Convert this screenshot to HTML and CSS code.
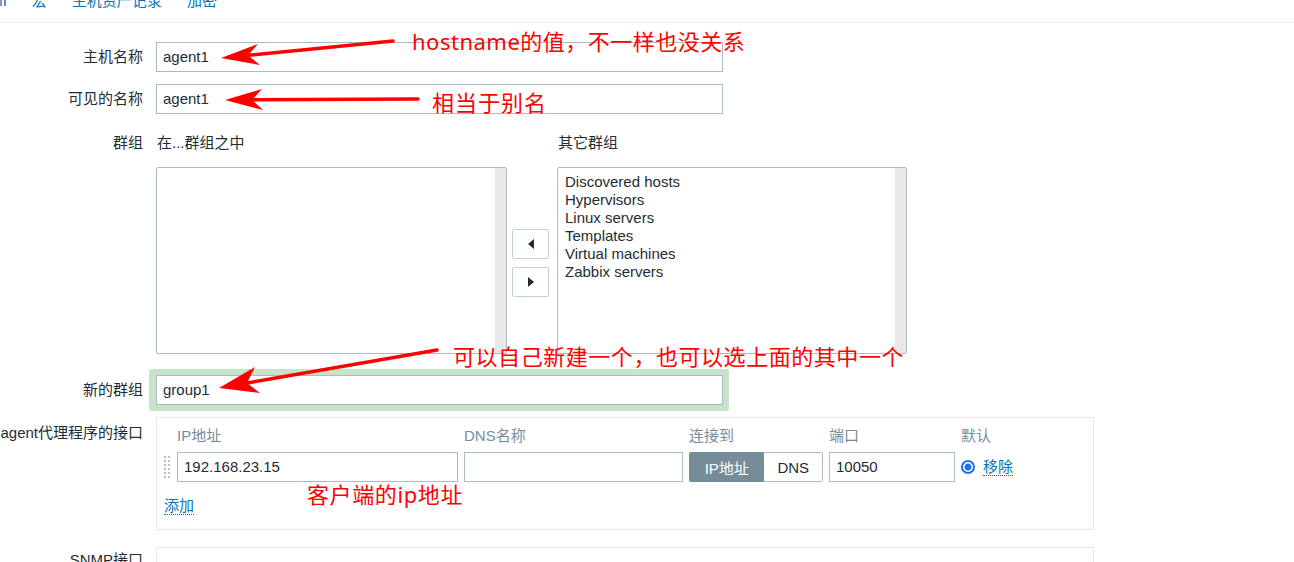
FILE: index.html
```html
<!DOCTYPE html>
<html lang="zh">
<head>
<meta charset="utf-8">
<title>主机</title>
<link rel="stylesheet" href="styles.css">
</head>
<body>
<nav class="tabs">
  <span class="tab first">IPMI</span>
  <span class="tab">宏</span>
  <span class="tab">主机资产记录</span>
  <span class="tab">加密</span>
</nav>

<div class="form">
  <div class="row r-name">
    <div class="lbl">主机名称</div>
    <div class="input w-name">agent1</div>
  </div>
  <div class="row r-visible">
    <div class="lbl">可见的名称</div>
    <div class="input w-name">agent1</div>
  </div>

  <div class="row r-groups">
    <div class="lbl">群组</div>
    <div class="groups">
      <div class="ghead">在...群组之中</div>
      <div></div>
      <div class="ghead">其它群组</div>
      <div class="listbox"><div class="items"></div><div class="sb"></div></div>
      <div class="movers">
        <button class="mv"><span class="tri-l"></span></button>
        <button class="mv"><span class="tri-r"></span></button>
      </div>
      <div class="listbox">
        <div class="items">
          <div>Discovered hosts</div>
          <div>Hypervisors</div>
          <div>Linux servers</div>
          <div>Templates</div>
          <div>Virtual machines</div>
          <div>Zabbix servers</div>
        </div>
        <div class="sb"></div>
      </div>
    </div>
  </div>

  <div class="row r-newgroup">
    <div class="lbl">新的群组</div>
    <div class="hl"><div class="input w-name">group1</div></div>
  </div>

  <div class="row r-iface">
    <div class="lbl lbl-top">agent代理程序的接口</div>
    <div class="iface">
      <div class="igrid">
        <div></div>
        <div class="ih">IP地址</div>
        <div class="ih">DNS名称</div>
        <div class="ih">连接到</div>
        <div class="ih">端口</div>
        <div class="ih">默认</div>

        <div class="handle"></div>
        <div class="input">192.168.23.15</div>
        <div class="input"></div>
        <div class="seg"><span class="seg-on">IP地址</span><span class="seg-off">DNS</span></div>
        <div class="input">10050</div>
        <div class="dflt"><span class="radio"></span><span class="link">移除</span></div>

        <div class="add"><span class="link">添加</span></div>
      </div>
    </div>
  </div>

  <div class="row r-snmp">
    <div class="lbl lbl-snmp">SNMP接口</div>
    <div class="iface snmp"></div>
  </div>
</div>

<div class="note n1">hostname的值，不一样也没关系</div>
<div class="note n2">相当于别名</div>
<div class="note n3">可以自己新建一个，也可以选上面的其中一个</div>
<div class="note n4">客户端的ip地址</div>

<svg class="arrows" width="1294" height="562" viewBox="0 0 1294 562">
  <g fill="#f00" stroke="#f00">
    <line x1="393" y1="41" x2="248" y2="55.3" stroke-width="3.5" stroke-linecap="round"/>
    <polygon points="221,58 258,44 248,55.3 260,65" stroke="none"/>
    <line x1="418" y1="99" x2="252" y2="99.8" stroke-width="3.5" stroke-linecap="round"/>
    <polygon points="225,100 262,89 252,99.8 263,110" stroke="none"/>
    <line x1="437" y1="350" x2="247" y2="383" stroke-width="3.5" stroke-linecap="round"/>
    <polygon points="219,388 255,367 247,383 260,393" stroke="none"/>
  </g>
</svg>
</body>
</html>
```
FILE: styles.css
```css
* { box-sizing: border-box; margin: 0; padding: 0; }

body {
  width: 1294px;
  height: 562px;
  overflow: hidden;
  position: relative;
  background: #fff;
  color: #1f2c33;
  font-family: "Liberation Sans", "Noto Sans CJK SC", sans-serif;
  font-size: 15px;
}

.tabs {
  display: flex;
  gap: 25px;
  height: 23px;
  border-bottom: 1px solid #ebebeb;
  overflow: hidden;
}
.tab {
  color: #0275b8;
  line-height: 18px;
  margin-top: -8px;
  white-space: nowrap;
}
.tab.first { margin-left: -24px; }

.form {
  display: flex;
  flex-direction: column;
  padding-top: 19px;
}
.row {
  display: grid;
  grid-template-columns: 143px auto;
  column-gap: 13px;
  align-items: center;
  justify-content: start;
}
.r-visible { margin-top: 12px; }
.r-groups { margin-top: 20px; align-items: start; }
.r-newgroup { margin-top: 15px; }
.r-iface { margin-top: 6px; align-items: start; }
.r-snmp { margin-top: 17px; align-items: start; }

.lbl {
  text-align: right;
  line-height: 18px;
  white-space: nowrap;
}
.lbl-top { padding-top: 7px; }
.lbl-snmp { padding-top: 4px; }

.input {
  height: 30px;
  border: 1px solid #acbbc2;
  background: #fff;
  padding: 0 6px;
  line-height: 28px;
  white-space: nowrap;
}
.w-name { width: 567px; }

.groups {
  display: grid;
  grid-template-columns: 351px 50px 350px;
  grid-template-rows: 18px 187px;
  row-gap: 15px;
}
.ghead { line-height: 18px; padding-left: 1px; }
.listbox {
  display: flex;
  border: 1px solid #acbbc2;
  border-radius: 2px;
  background: #fff;
}
.items {
  flex: 1;
  padding: 5px 0 0 7px;
  line-height: 18px;
}
.sb { width: 11px; background: #e8e8e8; }

.movers {
  display: flex;
  flex-direction: column;
  justify-content: center;
  gap: 8px;
  padding-left: 5px;
  padding-top: 4px;
}
.mv {
  width: 37px;
  height: 30px;
  border: 1px solid #c5d0d6;
  border-radius: 2px;
  background: #fff;
  display: flex;
  align-items: center;
  justify-content: center;
}
.tri-l, .tri-r {
  width: 0;
  height: 0;
  border-top: 5px solid transparent;
  border-bottom: 5px solid transparent;
}
.tri-l { border-right: 6px solid #1f2c33; }
.tri-r { border-left: 6px solid #1f2c33; }

.hl {
  margin-left: -7px;
  padding: 6px 6px 6px 7px;
  background: #c8e4c8;
  border-radius: 2px;
}

.iface {
  width: 938px;
  border: 1px solid #e8e8e8;
  padding: 9px 0 14px 6px;
}
.snmp { height: 40px; }
.igrid {
  display: grid;
  grid-template-columns: 8px 281px 219px 134px 126px auto;
  column-gap: 6px;
  row-gap: 7px;
  align-items: center;
  justify-content: start;
}
.ih {
  color: #768d99;
  line-height: 18px;
  white-space: nowrap;
}
.handle {
  width: 8px;
  height: 24px;
  background-image: radial-gradient(circle, #b6c1c7 1.1px, transparent 1.4px);
  background-size: 4px 4px;
}
.seg {
  display: flex;
  height: 30px;
}
.seg span {
  display: flex;
  align-items: center;
  justify-content: center;
}
.seg-on {
  width: 76px;
  background: #768d99;
  color: #fff;
  border: 1px solid #768d99;
  border-radius: 2px 0 0 2px;
}
.seg-off {
  width: 59px;
  border: 1px solid #acbbc2;
  border-left: none;
  border-radius: 0 2px 2px 0;
  background: #fff;
}
.dflt {
  display: flex;
  align-items: center;
  gap: 8px;
}
.radio {
  width: 14px;
  height: 14px;
  border-radius: 50%;
  border: 2px solid #1a73e8;
  background: radial-gradient(circle, #1a73e8 0 3.2px, #fff 3.8px);
}
.link {
  color: #0275b8;
  border-bottom: 1px dotted #0275b8;
  line-height: 17px;
}
.add {
  grid-column: 1 / 3;
  margin-top: 8px;
  padding-left: 1px;
  line-height: 18px;
}

.note {
  position: absolute;
  color: #f00;
  font-family: "Noto Sans", "Noto Sans CJK SC", sans-serif;
  font-size: 22px;
  line-height: 30px;
  letter-spacing: 0.7px;
  white-space: nowrap;
}
.n1 { left: 412px; top: 26px; letter-spacing: 0.5px; }
.n2 { left: 432px; top: 87px; letter-spacing: 1px; }
.n3 { left: 453px; top: 341px; letter-spacing: 0.55px; }
.n4 { left: 307px; top: 479px; letter-spacing: 0.6px; }

.arrows {
  position: absolute;
  left: 0;
  top: 0;
  pointer-events: none;
}
```
